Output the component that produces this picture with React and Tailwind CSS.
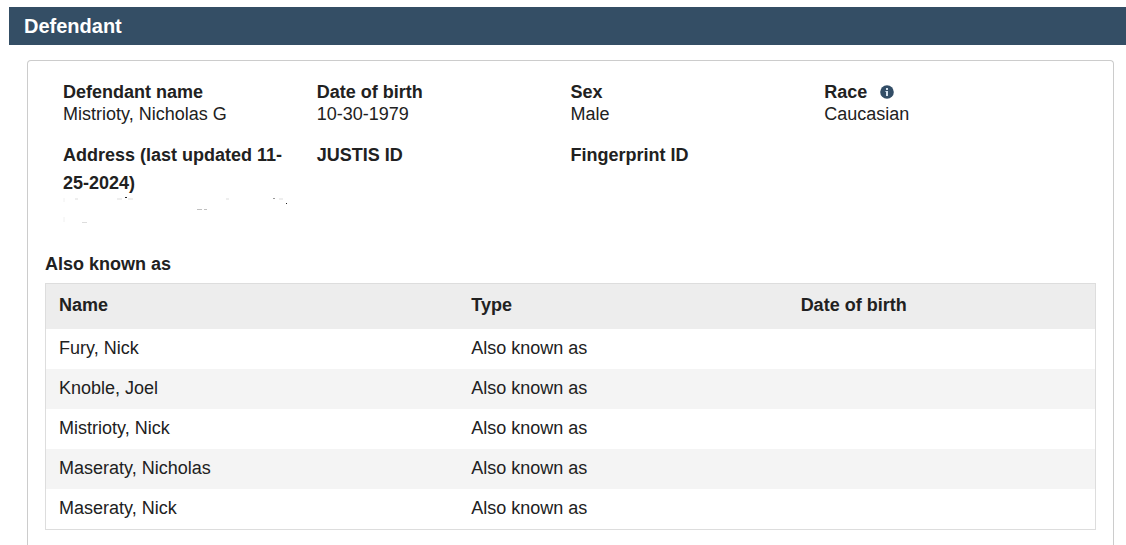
const FIELDS = [
  { label: 'Defendant name', value: 'Mistrioty, Nicholas G' },
  { label: 'Date of birth', value: '10-30-1979' },
  { label: 'Sex', value: 'Male' },
  { label: 'Race', value: 'Caucasian', info: true },
]

const ALIASES = [
  { name: 'Fury, Nick', type: 'Also known as', dob: '' },
  { name: 'Knoble, Joel', type: 'Also known as', dob: '' },
  { name: 'Mistrioty, Nick', type: 'Also known as', dob: '' },
  { name: 'Maseraty, Nicholas', type: 'Also known as', dob: '' },
  { name: 'Maseraty, Nick', type: 'Also known as', dob: '' },
]

function InfoIcon() {
  return (
    <svg width="14" height="14" viewBox="0 0 14 14" aria-hidden="true">
      <circle cx="7" cy="7" r="6.8" fill="#324d66" />
      <path d="M6 3h2v2H6zM6 6h2v5H6z" fill="#d5e2ee" />
      <path d="M5 6h1v1H5z" fill="#8ba2b8" />
    </svg>
  )
}

// What is left of the address once it has been redacted
function RedactedAddress() {
  return (
    <svg width="226" height="28" viewBox="0 0 226 28" role="img" aria-label="Redacted" fill="none">
      <path d="M1 1v4M1 20v5" stroke="#f0f0f0" />
      <path d="M12 2h3M54 2h5M65 2h5M163 2h3M216 2h4M19 25.500h5" stroke="#ddd" />
      <path d="M134 12.500h5M141 12.500h3" stroke="#c0c0c0" />
      <path d="M210 1.500h2" stroke="#999" />
      <path d="M62 .5h2M223 6.500h1" stroke="#222" />
    </svg>
  )
}

export default function App() {
  return (
    <main className="flex min-h-screen flex-col bg-white pl-[9px] pt-[7px] font-['Liberation_Sans',Arial,sans-serif] text-lg text-[#212121]">
      <h2 className="flex h-[38px] items-center bg-[#344e65] px-[15px] text-xl font-bold text-white">Defendant</h2>
      <section className="ml-[18px] mr-3 mt-[15px] grow rounded-t border border-b-0 border-[#ccc] px-[17px] pt-5">
        <dl className="grid grid-cols-4 gap-y-4 px-[18px]">
          {FIELDS.map((field) => (
            <div key={field.label} className="leading-[22px]">
              <dt className="flex items-center gap-[13px] font-bold">
                {field.label}
                {field.info && (
                  <button type="button" aria-label="About race">
                    <InfoIcon />
                  </button>
                )}
              </dt>
              <dd>{field.value}</dd>
            </div>
          ))}
          <div className="leading-7">
            <dt className="pr-8 font-bold">Address (last updated 11-25-2024)</dt>
            <dd>
              <RedactedAddress />
            </dd>
          </div>
          <div className="leading-7">
            <dt className="font-bold">JUSTIS ID</dt>
            <dd />
          </div>
          <div className="leading-7">
            <dt className="font-bold">Fingerprint ID</dt>
            <dd />
          </div>
        </dl>
        <h3 id="aliases" className="mt-[25px] font-bold leading-7">
          Also known as
        </h3>
        <div className="mt-[5px] border border-[#ddd]">
          <table aria-labelledby="aliases" className="w-full table-fixed text-left">
            <thead className="bg-[#ededed]">
              <tr className="h-[45px]">
                <th className="w-[39.300%] px-[13px] pb-1">Name</th>
                <th className="w-[31.400%] px-[13px] pb-1">Type</th>
                <th className="px-[13px] pb-1">Date of birth</th>
              </tr>
            </thead>
            <tbody>
              {ALIASES.map((alias) => (
                <tr key={alias.name} className="h-10 even:bg-[#f4f4f4]">
                  <td className="px-[13px] pb-0.5">{alias.name}</td>
                  <td className="px-[13px] pb-0.5">{alias.type}</td>
                  <td className="px-[13px] pb-0.5">{alias.dob}</td>
                </tr>
              ))}
            </tbody>
          </table>
        </div>
      </section>
    </main>
  )
}
